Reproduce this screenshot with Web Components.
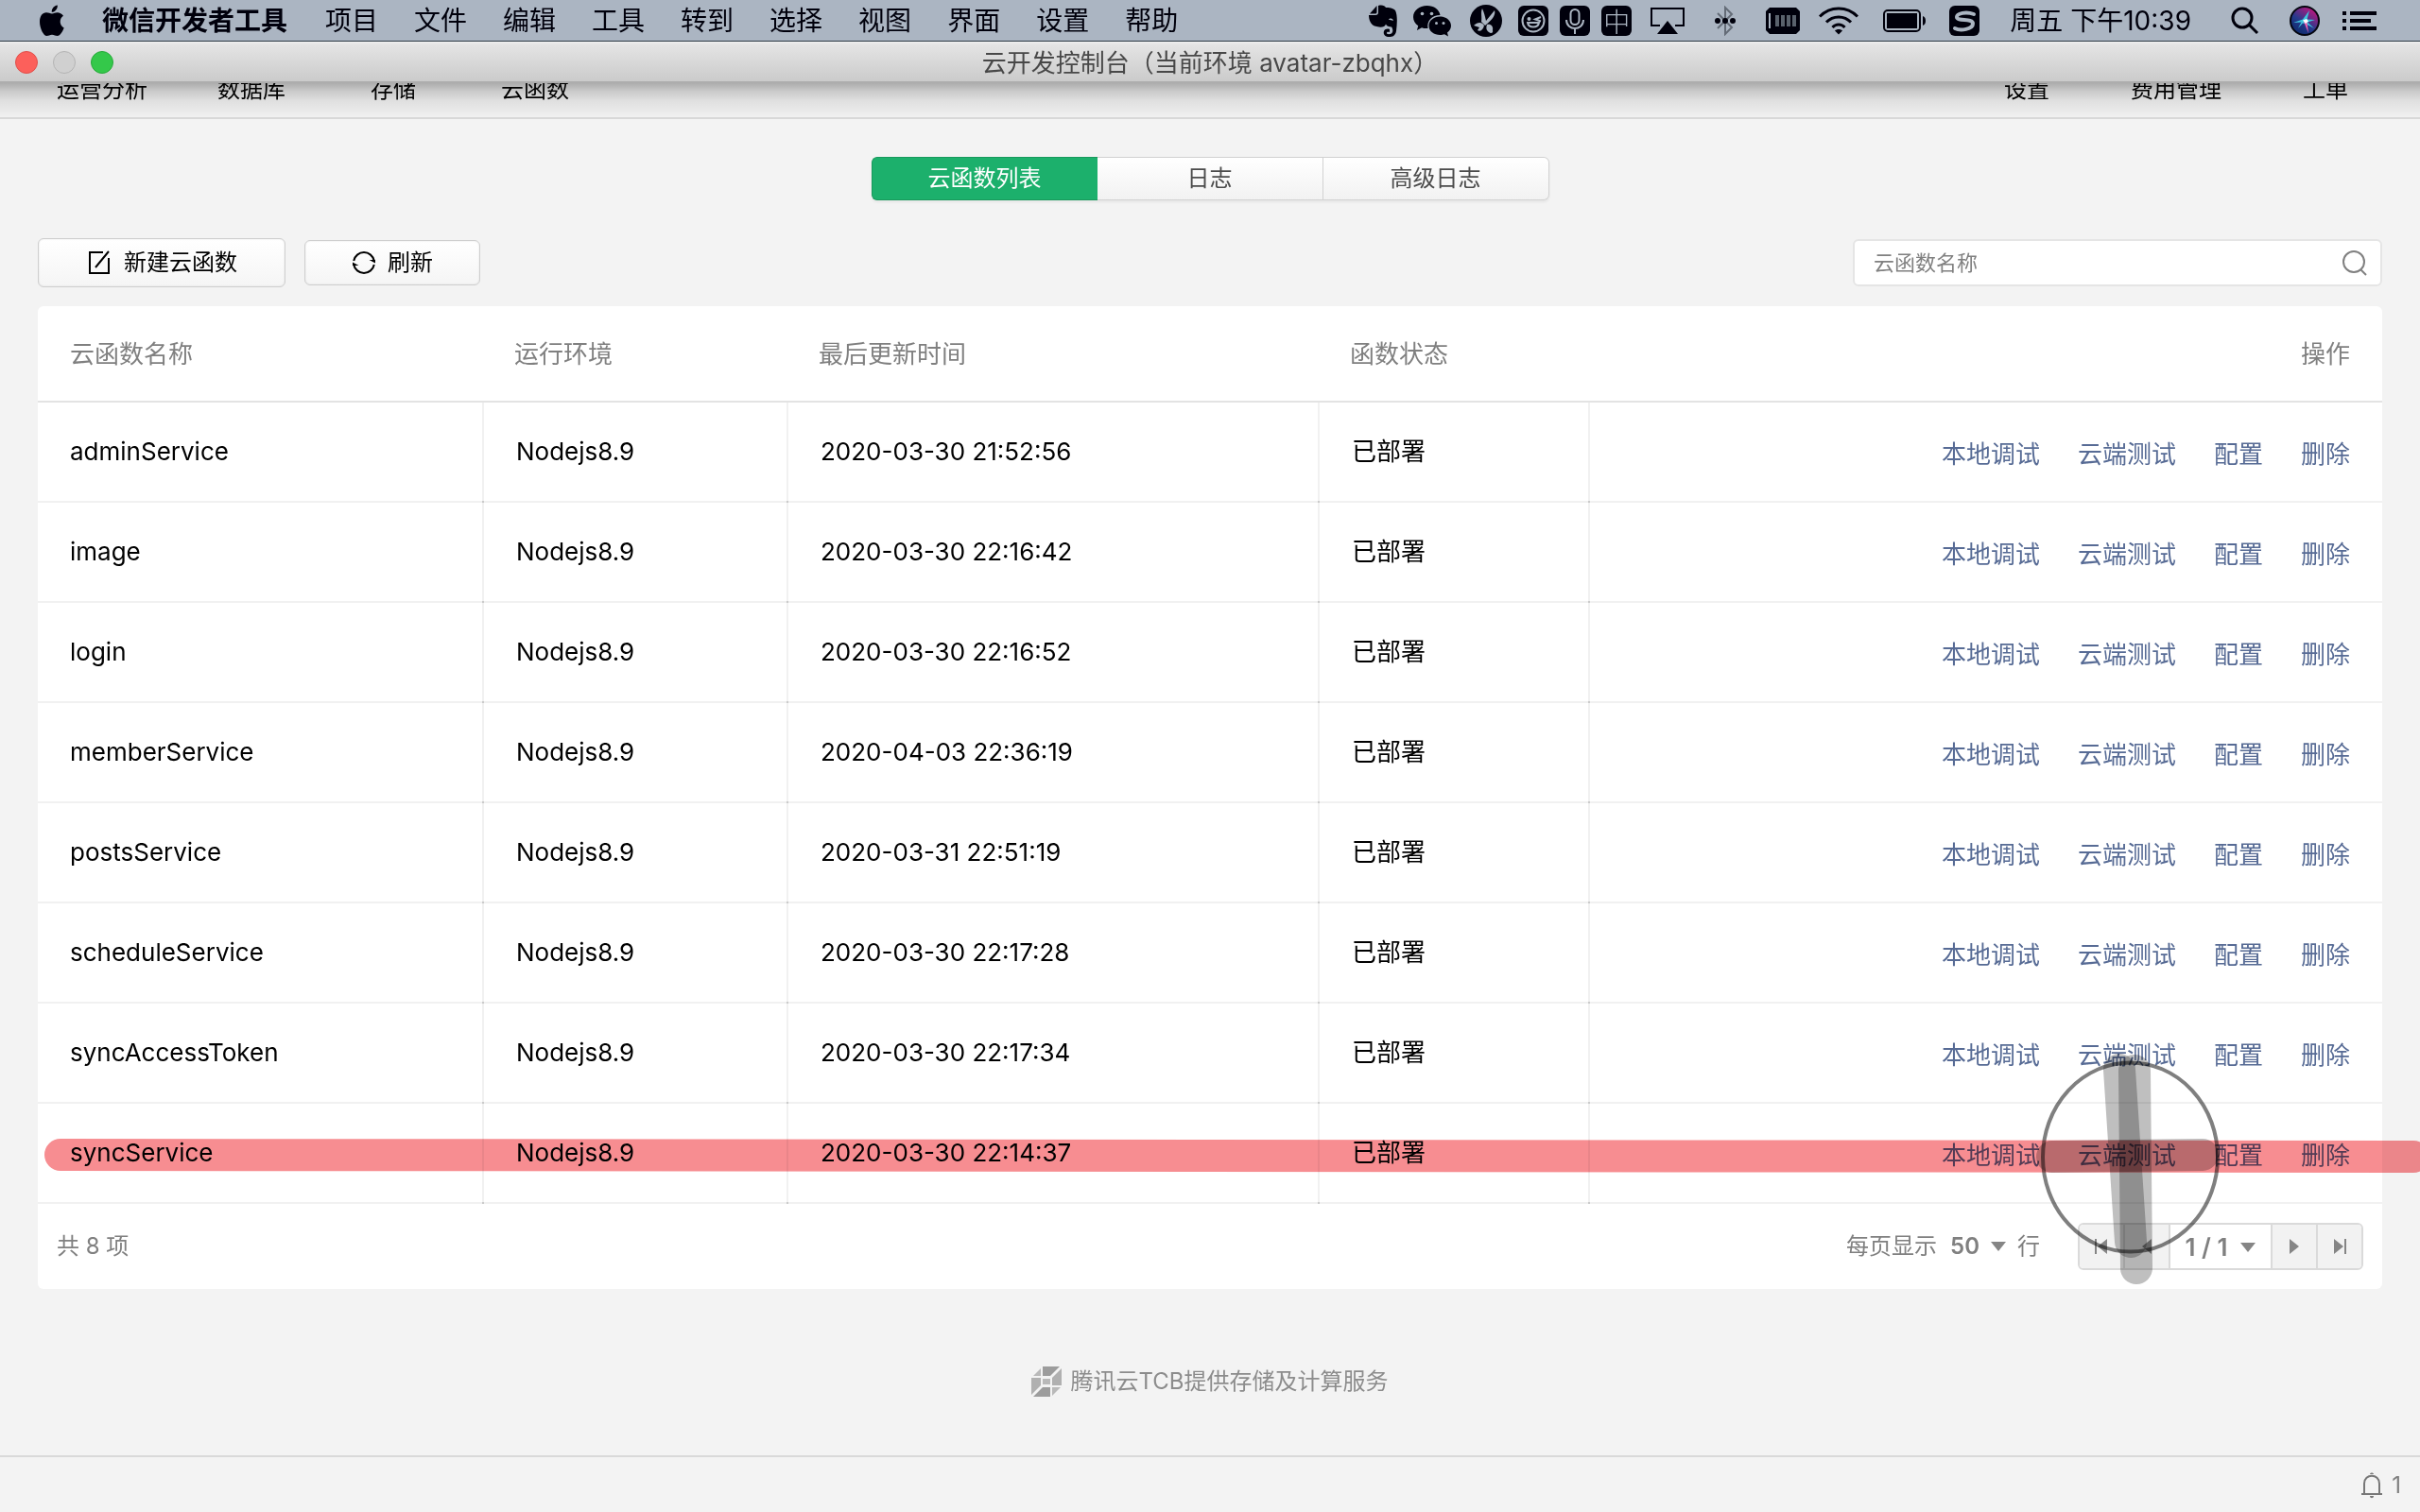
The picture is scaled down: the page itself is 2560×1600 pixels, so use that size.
<!DOCTYPE html>
<html lang="zh-CN">
<head>
<meta charset="utf-8">
<title>云开发控制台</title>
<style>
  body {
    margin: 0;
    min-height: 100vh;
    display: flex;
    flex-direction: column;
    background: #f3f3f3;
    color: #000;
    font-family: Inter, "Noto Sans CJK SC", sans-serif;
    font-size: 24px;
    line-height: 32px;
    overflow: hidden;
  }
  main { flex: 1; display: flex; flex-direction: column; padding: 40px 40px 0; }
  .toolbar { display: flex; align-items: center; gap: 20px; margin: 40px 0 20px; }
  search-box { margin-left: auto; }
  cloud-credit { margin-top: 82px; }
</style>
</head>
<body>
<mac-menubar></mac-menubar>
<window-titlebar>云开发控制台（当前环境 avatar-zbqhx）</window-titlebar>
<console-nav></console-nav>
<main>
  <segment-tabs></segment-tabs>
  <div class="toolbar">
    <tool-button size="large">
      <svg slot="icon" width="24" height="26" viewBox="0 0 24 26" fill="none" stroke="#000" stroke-width="2"><path d="M16 2H2V24H22V8M22 1L8 18"/></svg>
      新建云函数
    </tool-button>
    <tool-button>
      <svg slot="icon" width="26" height="26" viewBox="0 0 26 26" fill="none" stroke="#000" stroke-width="2"><path d="M2.200 11A11 11 0 0 1 23.800 11M23.800 15A11 11 0 0 1 2.200 15"/><path d="M18.500 10H25V13.500ZM7.500 16H1V12.500Z" fill="#000" stroke="none"/></svg>
      刷新
    </tool-button>
    <search-box></search-box>
  </div>
  <function-card></function-card>
  <cloud-credit>腾讯云TCB提供存储及计算服务</cloud-credit>
</main>
<status-bar></status-bar>
<ink-layer></ink-layer>

<script>
const define = (name, html, setup) => customElements.define(name, class extends HTMLElement {
  constructor() {
    super();
    this.attachShadow({ mode: 'open' }).innerHTML = html;
    if (setup) setup(this.shadowRoot);
  }
});

define('mac-menubar', `
<style>
  :host { display: flex; align-items: center; justify-content: space-between; height: 42px; border-bottom: 1px solid #2d3a44; background: #abb5c2; color: #00000c; font-size: 28px; line-height: 40px; padding: 1px 46px 0 42px; }
  nav, .status { display: flex; align-items: center; }
  nav { gap: 38px; }
  a { color: inherit; text-decoration: none; white-space: nowrap; }
  .app { font-weight: 700; margin: 0 2px; }
  svg { display: block; flex: none; }
  .ime { width: 32px; height: 32px; border-radius: 6px; background: #00000c; color: #abb5c2; font: 300 28px/32px "Noto Sans CJK SC", sans-serif; text-align: center; }
  .g12 { margin-left: 12px; } .g17 { margin-left: 17px; } .g20 { margin-left: 20px; } .g24 { margin-left: 24px; } .g26 { margin-left: 26px; } .g32 { margin-left: 32px; } .g42 { margin-left: 42px; }
</style>
<nav>
  <svg width="26" height="34" viewBox="0 0 26 34" fill="#00000c"><path d="M13 9.500C11 9.500 9.500 8.300 7 8.300C3 8.300 0 12 0 18C0 25 4 33 7.500 33C9.500 33 10.500 31.700 13 31.700C15.600 31.700 16.500 33 18.600 33C21.600 33 24.500 28 25.700 24.500C20.600 22 20.500 14.500 25 11.800C23.500 9.500 21 8.300 18.600 8.300C16.300 8.300 15 9.500 13 9.500ZM12.700 7.800C12.500 4 15.500 0.800 18.800 0.500C19.200 4.500 16 8 12.700 7.800Z"/></svg>
  <a href="#" class="app">微信开发者工具</a>
  <a href="#">项目</a><a href="#">文件</a><a href="#">编辑</a><a href="#">工具</a><a href="#">转到</a><a href="#">选择</a><a href="#">视图</a><a href="#">界面</a><a href="#">设置</a><a href="#">帮助</a>
</nav>
<div class="status">
  <svg width="30" height="34" viewBox="0 0 30 34" fill="#00000c"><path d="M8.500 1L1 9.500H6.500C8 9.500 8.500 9 8.500 7.500Z"/><path d="M10 1C14 0 17 1 18 3C21 3 26 3.500 28 6C30.500 11 30 20 29 28C28 33 25 34 21.500 34C17 34 15 31 16 28C17 25.500 20 25 22 26V29C20 28.500 19 29 19 30C19 31.500 22 31.500 24 30.500C26 29 25.500 25 24 23.500C21 23 19 23 18 20.500C17 24 12 24.500 6 22.500C2 21 0 16 0 11H7C9 11 10 10 10 8Z"/><path d="M21 16C22 14 25 14 26 17C24 16.300 22.500 16 21 16Z" fill="#abb5c2"/></svg>
  <svg class="g17" width="40" height="34" viewBox="0 0 40 34" fill="#00000c"><path d="M14.500 1C6.500 1 0 6.200 0 13C0 17 2 20 5.200 22.200L4 27L9 24.200C11 25 13 25.200 15.500 25C14 17 20 11 28.500 11C27.500 5 22 1 14.500 1Z"/><path d="M28.500 12.500C21.500 12.500 16.500 17 16.500 22.200C16.500 28 22 32 28.500 32C30 32 31.500 31.800 33 31.200L37 33.500L36 29.500C38.500 27.500 40 25 40 22.200C40 17 35 12.500 28.500 12.500Z"/><g fill="#abb5c2"><circle cx="9.500" cy="9.500" r="1.800"/><circle cx="19.500" cy="9.500" r="1.800"/><circle cx="24.500" cy="19.500" r="1.500"/><circle cx="32" cy="19.500" r="1.500"/></g></svg>
  <svg class="g20" width="34" height="34" viewBox="0 0 34 34"><circle cx="17" cy="17" r="17" fill="#00000c"/><g fill="#abb5c2"><path d="M13 4C15 8 16 13 17 17L26 6C27 9 26 13 20 18.500L16 22L12 18C13 13 11 8 13 4Z"/><path d="M4 22C8 18 13 18 15 22C14 27 10 29 8 27L10 24ZM18 21C22 20 25 23 24 27C25 30 22 31 20 29C17 27 17 24 18 21Z"/></g></svg>
  <svg class="g17" width="32" height="32" viewBox="0 0 32 32" fill="none" stroke="#abb5c2" stroke-width="2"><rect width="32" height="32" rx="6" fill="#00000c" stroke="none"/><circle cx="16" cy="16" r="11.500"/><path d="M10 18C11 24 21 24 22 18ZM24 12L18 14.500L24 16.500"/><circle cx="11.500" cy="14" r="2" fill="#abb5c2" stroke="none"/></svg>
  <svg class="g12" width="32" height="32" viewBox="0 0 32 32" fill="none" stroke="#abb5c2" stroke-width="2"><rect width="32" height="32" rx="6" fill="#00000c" stroke="none"/><rect x="11.500" y="4" width="9" height="16" rx="4.500"/><path d="M7 15C7 27 25 27 25 15M16 24V30"/></svg>
  <div class="ime g12">中</div>
  <svg class="g20" width="36" height="30" viewBox="0 0 36 30"><path d="M10 20H1V2H35V20H26" fill="none" stroke="#00000c" stroke-width="2"/><path d="M18 15L29 29H7Z" fill="#00000c"/></svg>
  <svg class="g32" width="22" height="32" viewBox="0 0 22 32"><path d="M3 8L18 23L11 30V2L18 9L3 24" fill="none" stroke="#646c77" stroke-width="2"/><g fill="#00000c"><circle cx="3" cy="16" r="3"/><circle cx="11" cy="16" r="3"/><circle cx="19" cy="16" r="3"/></g></svg>
  <svg class="g32" width="36" height="28" viewBox="0 0 36 28"><path d="M4 0H32L36 4V24L32 28H4L0 24V4Z" fill="#00000c"/><path d="M3 6H5V22H3Z" fill="#abb5c2"/><path d="M10 8H14V20H10ZM16 8H20V20H16ZM22 8H26V20H22ZM28 8H32V20H28Z" fill="#59616c"/></svg>
  <svg class="g20" width="42" height="30" viewBox="0 0 42 30" fill="none" stroke="#00000c" stroke-width="3"><path d="M1 10.500C12 -1 30 -1 41 10.500M8 16.500C15 9 27 9 34 16.500M14.500 22C18 18 24 18 27.500 22"/><path d="M21 29.500L17 25.500C19 23.500 23 23.500 25 25.500Z" fill="#00000c" stroke="none"/></svg>
  <svg class="g26" width="46" height="24" viewBox="0 0 46 24"><rect x="1" y="1" width="38" height="22" rx="4" fill="none" stroke="#00000c" stroke-width="2"/><rect x="4" y="4" width="32" height="16" fill="#00000c"/><path d="M42 7C46 8 46 16 42 17Z" fill="#00000c"/></svg>
  <svg class="g24" width="32" height="32" viewBox="0 0 32 32"><rect width="32" height="32" rx="6" fill="#00000c"/><path d="M26 9C18 6 8 8 8 12C8 17 25 13 25 19C25 25 12 27 6 24" fill="none" stroke="#abb5c2" stroke-width="4" stroke-linecap="round"/></svg>
  <a href="#" class="g32">周五 下午10:39</a>
  <svg class="g42" width="30" height="30" viewBox="0 0 30 30" fill="none" stroke="#00000c" stroke-width="3"><circle cx="12" cy="12" r="10"/><path d="M19 19L28 28"/></svg>
  <svg class="g32" width="32" height="32" viewBox="0 0 32 32"><defs><linearGradient id="s" x1="0" y1="1" x2="0.700" y2="0"><stop offset="0" stop-color="#06245e"/><stop offset="0.500" stop-color="#243a8c"/><stop offset="1" stop-color="#c0177e"/></linearGradient></defs><circle cx="16" cy="16" r="15" fill="url(#s)" stroke="#05060f" stroke-width="2"/><path d="M4 18L14 14.500L21 5L18.500 14.500L27 15L19 17.500L26 24L17.500 19.500L14 18.500L9 24L12.500 17.500Z" fill="#3ec5dd"/><path d="M15 17L20 29L18.500 17Z" fill="#e85fae"/><path d="M14 15.500L18 14L20 16.500L17 19Z" fill="#fff"/></svg>
  <svg class="g24" width="36" height="20" viewBox="0 0 36 20" fill="#00000c"><path d="M0 0H4V4H0ZM0 8H4V12H0ZM0 16H4V20H0ZM8 0H36V4H8ZM8 8H30V12H8ZM8 16H36V20H8Z"/></svg>
</div>`);

define('window-titlebar', `
<style>
  :host { display: grid; grid-template-columns: 1fr auto 1fr; align-items: center; height: 40px; border-bottom: 2px solid #adadad; padding: 2px 16px 0; position: relative; z-index: 1; background: linear-gradient(#f0f0f0, #e4e4e4 3px, #cbcbcb); color: #484848; font-size: 26px; }
  :host::after { content: ""; position: absolute; left: 0; right: 0; top: 100%; height: 36px; margin-top: 2px; background: linear-gradient(rgba(0,0,0,.29), rgba(0,0,0,.17) 24%, rgba(0,0,0,.08) 53%, rgba(0,0,0,.01)); pointer-events: none; }
  .lights { display: flex; gap: 16px; }
  button { width: 24px; height: 24px; padding: 0; border-radius: 50%; border: 1px solid; }
  .close { background: #fc605b; border-color: #e0504b; }
  .min { background: #d0d0d0; border-color: #b4b4b4; }
  .max { background: #34c84a; border-color: #27aa3a; }
  span { padding-top: 1px; }
</style>
<div class="lights"><button class="close" aria-label="关闭"></button><button class="min" aria-label="最小化"></button><button class="max" aria-label="最大化"></button></div>
<span><slot></slot></span>`);

define('console-nav', `
<style>
  :host { display: flex; align-items: center; justify-content: space-between; height: 60px; margin-top: -24px; padding: 0 76px 0 60px; border-bottom: 2px solid #d8d8d8; }
  nav { display: flex; gap: 90px; padding-top: 2px; }
  .right { gap: 86px; }
  a { color: #000; text-decoration: none; }
  .first { margin-right: -16px; }
</style>
<nav><a href="#" class="first">运营分析</a><a href="#">数据库</a><a href="#">存储</a><a href="#">云函数</a></nav>
<nav class="right"><a href="#">设置</a><a href="#">费用管理</a><a href="#">工单</a></nav>`);

define('segment-tabs', `
<style>
  :host { display: flex; align-self: center; border-radius: 6px; box-shadow: 0 2px 3px rgba(0,0,0,.06); }
  button { box-sizing: border-box; width: 239px; height: 46px; padding: 0; border: 1px solid #d2d2d2; border-left-width: 0; background: linear-gradient(#fff, #f2f2f2); color: #4c4c4c; font: inherit; }
  .on { border-color: #18995c; border-right-width: 0; border-left-width: 1px; border-radius: 6px 0 0 6px; background: #1cb06c; color: #fff; }
  .last { border-radius: 0 6px 6px 0; }
</style>
<button class="on">云函数列表</button><button>日志</button><button class="last">高级日志</button>`);

define('tool-button', `
<style>
  :host { display: block; }
  button { display: flex; align-items: center; justify-content: center; gap: 12px; height: 48px; padding: 0 49px; border: 1px solid #cfcfcf; border-radius: 6px; box-sizing: border-box; background: linear-gradient(#fff, #f5f5f5); box-shadow: inset 0 0 2px rgba(0,0,0,.12); color: #000; font: inherit; }
  :host([size=large]) button { height: 52px; gap: 14px; padding: 0 50px 0 52px; }
</style>
<button><slot name="icon"></slot><span><slot></slot></span></button>`);

define('search-box', `
<style>
  :host { display: flex; align-items: center; box-sizing: border-box; width: 560px; height: 50px; padding: 0 14px 0 20px; border: 2px solid #e5e5e5; border-radius: 6px; background: #fff; }
  input { flex: 1; min-width: 0; padding: 0; border: 0; outline: 0; background: none; font: inherit; font-size: 22px; }
  input::placeholder { color: #808080; opacity: 1; }
</style>
<input type="text" aria-label="云函数名称" placeholder="云函数名称">
<svg width="26" height="28" viewBox="0 0 26 28" fill="none" stroke="#808080" stroke-width="2"><circle cx="12" cy="13" r="11"/><path d="M19.500 21.500L25 27"/></svg>`);

const functions = [
  ['adminService', '2020-03-30 21:52:56'], ['image', '2020-03-30 22:16:42'],
  ['login', '2020-03-30 22:16:52'], ['memberService', '2020-04-03 22:36:19'],
  ['postsService', '2020-03-31 22:51:19'], ['scheduleService', '2020-03-30 22:17:28'],
  ['syncAccessToken', '2020-03-30 22:17:34'], ['syncService', '2020-03-30 22:14:37']
];

define('function-table', `
<style>
  :host { display: block; font-size: 26px; }
  table { width: 100%; table-layout: fixed; border-collapse: separate; border-spacing: 0; }
  th, td { padding: 0 34px; text-align: left; white-space: nowrap; }
  th { height: 100px; padding-top: 2px; box-sizing: border-box; height: 102px; border-bottom: 2px solid #e3e3e3; color: #808080; font-weight: 400; }
  td { height: 104px; padding-bottom: 2px; background: linear-gradient(#f1f1f1, #f1f1f1) bottom / 100% 2px no-repeat; }
  td + td { padding-left: 36px; background: linear-gradient(#cbcbcb, #cbcbcb) left bottom / 2px 2px no-repeat, linear-gradient(#f1f1f1, #f1f1f1) left / 2px 100% no-repeat, linear-gradient(#f1f1f1, #f1f1f1) bottom / 100% 2px no-repeat; }
  th:last-child { text-align: right; }
  .links { display: flex; justify-content: flex-end; gap: 40px; padding-top: 6px; }
  a { color: #576b95; text-decoration: none; }
</style>
<table>
  <colgroup><col style="width:470px"><col style="width:322px"><col style="width:562px"><col style="width:286px"><col></colgroup>
  <thead><tr><th>云函数名称</th><th>运行环境</th><th>最后更新时间</th><th>函数状态</th><th>操作</th></tr></thead>
  <tbody></tbody>
</table>`, root => {
  root.querySelector('tbody').innerHTML = functions.map(([name, time]) => `<tr><td>${name}</td><td>Nodejs8.9</td><td>${time}</td><td>已部署</td><td><div class="links"><a href="#">本地调试</a><a href="#">云端测试</a><a href="#">配置</a><a href="#">删除</a></div></td></tr>`).join('');
});

define('table-pager', `
<style>
  :host { display: flex; align-items: center; height: 90px; padding: 0 20px; color: #808080; }
  .size { display: flex; align-items: center; gap: 12px; margin: 0 40px 0 auto; }
  select { appearance: none; padding: 0; border: 0; outline: 0; background: none; color: inherit; font: inherit; font-weight: 600; field-sizing: content; }
  label { display: flex; align-items: center; gap: 14px; }
  .pages { display: flex; border: 2px solid #dadada; border-radius: 6px; overflow: hidden; }
  button { display: flex; align-items: center; justify-content: center; box-sizing: border-box; width: 48px; height: 46px; padding: 0; border: 0 solid #dadada; border-right-width: 2px; background: #f2f2f2; }
  .next { border-width: 0 0 0 2px; }
  .page { width: 106px; justify-content: center; padding-top: 2px; box-sizing: border-box; font-size: 26px; }
  svg { display: block; fill: #858585; }
</style>
<span>共 8 项</span>
<div class="size">
  <label>每页显示 <select><option>50</option></select></label>
  <svg width="16" height="10" viewBox="0 0 16 10"><path d="M0 0H16L8 10Z"/></svg>
  <span>行</span>
</div>
<div class="pages">
  <button aria-label="首页"><svg width="14" height="16" viewBox="0 0 14 16"><path d="M0 0H2V16H0ZM13 0V16L3 8Z"/></svg></button>
  <button aria-label="上一页"><svg width="10" height="16" viewBox="0 0 10 16"><path d="M10 0V16L0 8Z"/></svg></button>
  <label class="page"><select aria-label="页码"><option>1 / 1</option></select><svg width="16" height="10" viewBox="0 0 16 10"><path d="M0 0H16L8 10Z"/></svg></label>
  <button class="next" aria-label="下一页"><svg width="10" height="16" viewBox="0 0 10 16"><path d="M0 0V16L10 8Z"/></svg></button>
  <button class="next" aria-label="末页"><svg width="14" height="16" viewBox="0 0 14 16"><path d="M12 0H14V16H12ZM1 0V16L11 8Z"/></svg></button>
</div>`);

define('function-card', `
<style>
  :host { display: block; background: #fff; border-radius: 6px; }
</style>
<function-table></function-table>
<table-pager></table-pager>`);

define('cloud-credit', `
<style>
  :host { display: flex; align-items: center; justify-content: center; gap: 9px; color: #8c8c8c; }
</style>
<svg width="32" height="32" viewBox="0 0 32 32"><path d="M12 0H30L20 10H12Z" fill="#9c9c9c"/><path d="M10 2V10H2Z" fill="#b9b9b9"/><path d="M32 2V20H22V12Z" fill="#b0b0b0"/><path d="M0 12H10V20L0 30Z" fill="#b0b0b0"/><path d="M12 13H20V19H12Z" fill="#b9b9b9"/><path d="M12 22H20V32H2Z" fill="#9c9c9c"/><path d="M22 22H31L22 31Z" fill="#b9b9b9"/></svg>
<span><slot></slot></span>`);

define('status-bar', `
<style>
  :host { display: flex; align-items: center; justify-content: flex-end; gap: 10px; box-sizing: border-box; height: 60px; margin-top: auto; padding: 2px 20px 0; border-top: 2px solid #d9d9d9; color: #808080; }
</style>
<svg width="22" height="28" viewBox="0 0 22 28" fill="none" stroke="#777" stroke-width="2"><path d="M3 23V12C3 1 19 1 19 12V23M0 23H22"/><path d="M9 2C9 0 13 0 13 2ZM9 25H13C13 28 9 28 9 25Z" fill="#777" stroke="none"/></svg>
<span>1</span>`);

/* Freehand marker strokes laid over the whole window. */
define('ink-layer', `
<style>
  :host { position: absolute; inset: 0; z-index: 5; mix-blend-mode: multiply; pointer-events: none; overflow: hidden; }
  svg { display: block; width: 2560px; height: 1600px; }
  line, ellipse { mix-blend-mode: multiply; fill: none; stroke: #bfbfbf; stroke-width: 34; stroke-linecap: round; }
</style>
<svg viewBox="0 0 2560 1600">
  <line x1="64" y1="1222" x2="2553" y2="1224" style="stroke:#f78d91"/>
  <line x1="2242" y1="1132" x2="2254" y2="1314"/>
  <line x1="2258" y1="1133" x2="2260" y2="1342"/>
  <line x1="2171" y1="1224" x2="2330" y2="1222"/>
  <ellipse cx="2253.500" cy="1224.500" rx="92.500" ry="100" style="stroke:#7f7f7f;stroke-width:4"/>
</svg>`);
</script>
</body>
</html>
